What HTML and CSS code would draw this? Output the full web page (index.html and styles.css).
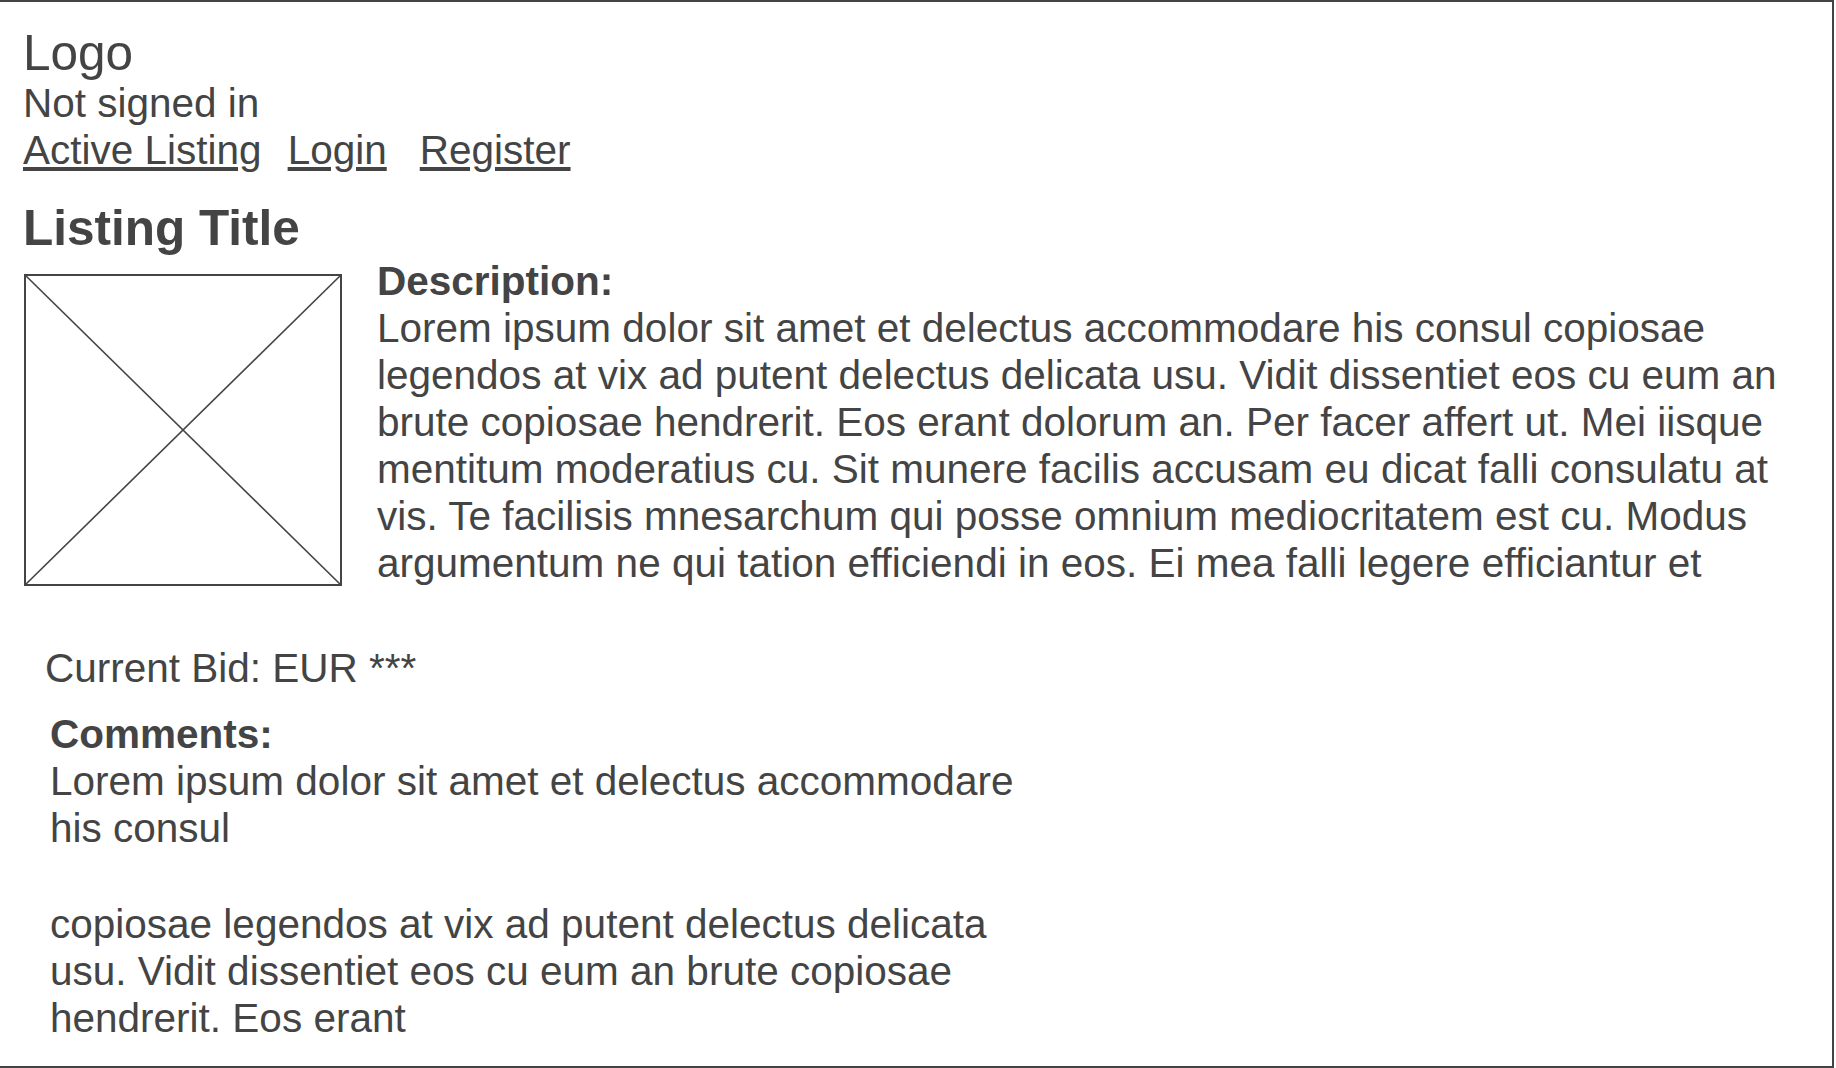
FILE: index.html
```html
<!DOCTYPE html>
<html lang="en">
<head>
<meta charset="utf-8">
<title>Listing</title>
<link rel="stylesheet" href="styles.css">
</head>
<body>
<div class="frame">
  <header class="site-header">
    <div class="logo">Logo</div>
    <div class="status">Not signed in</div>
    <nav class="nav">
      <a href="#" class="nav-link nav-link--first">Active Listing</a>
      <a href="#" class="nav-link nav-link--second">Login</a>
      <a href="#" class="nav-link">Register</a>
    </nav>
  </header>

  <main class="listing">
    <h1 class="listing-title">Listing Title</h1>
    <section class="listing-body">
      <div class="image-placeholder">
        <svg class="image-svg" viewBox="0 0 100 100" preserveAspectRatio="none">
          <line x1="0" y1="0" x2="100" y2="100" vector-effect="non-scaling-stroke"></line>
          <line x1="100" y1="0" x2="0" y2="100" vector-effect="non-scaling-stroke"></line>
        </svg>
      </div>
      <div class="description">
        <div class="label">Description:</div>
        <p class="description-text">Lorem ipsum dolor sit amet et delectus accommodare his consul copiosae legendos at vix ad putent delectus delicata usu. Vidit dissentiet eos cu eum an brute copiosae hendrerit. Eos erant dolorum an. Per facer affert ut. Mei iisque mentitum moderatius cu. Sit munere facilis accusam eu dicat falli consulatu at vis. Te facilisis mnesarchum qui posse omnium mediocritatem est cu. Modus argumentum ne qui tation efficiendi in eos. Ei mea falli legere efficiantur et</p>
      </div>
    </section>

    <div class="current-bid">Current Bid: EUR ***</div>

    <section class="comments">
      <div class="label">Comments:</div>
      <p class="comment">Lorem ipsum dolor sit amet et delectus accommodare his consul</p>
      <p class="comment">copiosae legendos at vix ad putent delectus delicata usu. Vidit dissentiet eos cu eum an brute copiosae hendrerit. Eos erant</p>
    </section>
  </main>
</div>
</body>
</html>
```

FILE: styles.css
```css
* {
  box-sizing: border-box;
}

html, body {
  margin: 0;
  padding: 0;
  background: #ffffff;
}

body {
  font-family: "Liberation Sans", Arial, sans-serif;
  color: #444444;
  font-size: 40.5px;
  line-height: 47px;
}

.frame {
  width: 1834px;
  height: 1068px;
  border-top: 2px solid #444444;
  border-right: 2px solid #444444;
  border-bottom: 2px solid #444444;
  padding: 27px 0 0 23px;
  overflow: hidden;
}

.logo {
  font-size: 49.5px;
  line-height: 48px;
  margin-bottom: 3px;
}

.status {
  line-height: 47px;
}

.nav {
  display: flex;
  line-height: 47px;
}

.nav-link {
  color: #444444;
  text-decoration: underline;
  margin-right: 33px;
}

.nav-link--first {
  margin-right: 26px;
}

.nav-link--second {
  margin-right: 33px;
}

.listing-title {
  font-size: 49.5px;
  line-height: 48px;
  font-weight: bold;
  margin: 30px 0 6px 0;
}

.listing-body {
  display: flex;
  align-items: flex-start;
  gap: 35px;
}

.image-placeholder {
  flex: none;
  width: 318px;
  height: 312px;
  margin: 16px 0 0 1px;
  border: 2px solid #444444;
}

.image-svg {
  display: block;
  width: 100%;
  height: 100%;
}

.image-svg line {
  stroke: #444444;
  stroke-width: 1.6;
}

.description {
  width: 1420px;
}

.label {
  font-weight: bold;
}

.description-text {
  margin: 0;
}

.current-bid {
  margin: 58px 0 0 22px;
}

.comments {
  margin: 19px 0 0 27px;
  width: 1010px;
}

.comment {
  margin: 0 0 49px 0;
}
```
